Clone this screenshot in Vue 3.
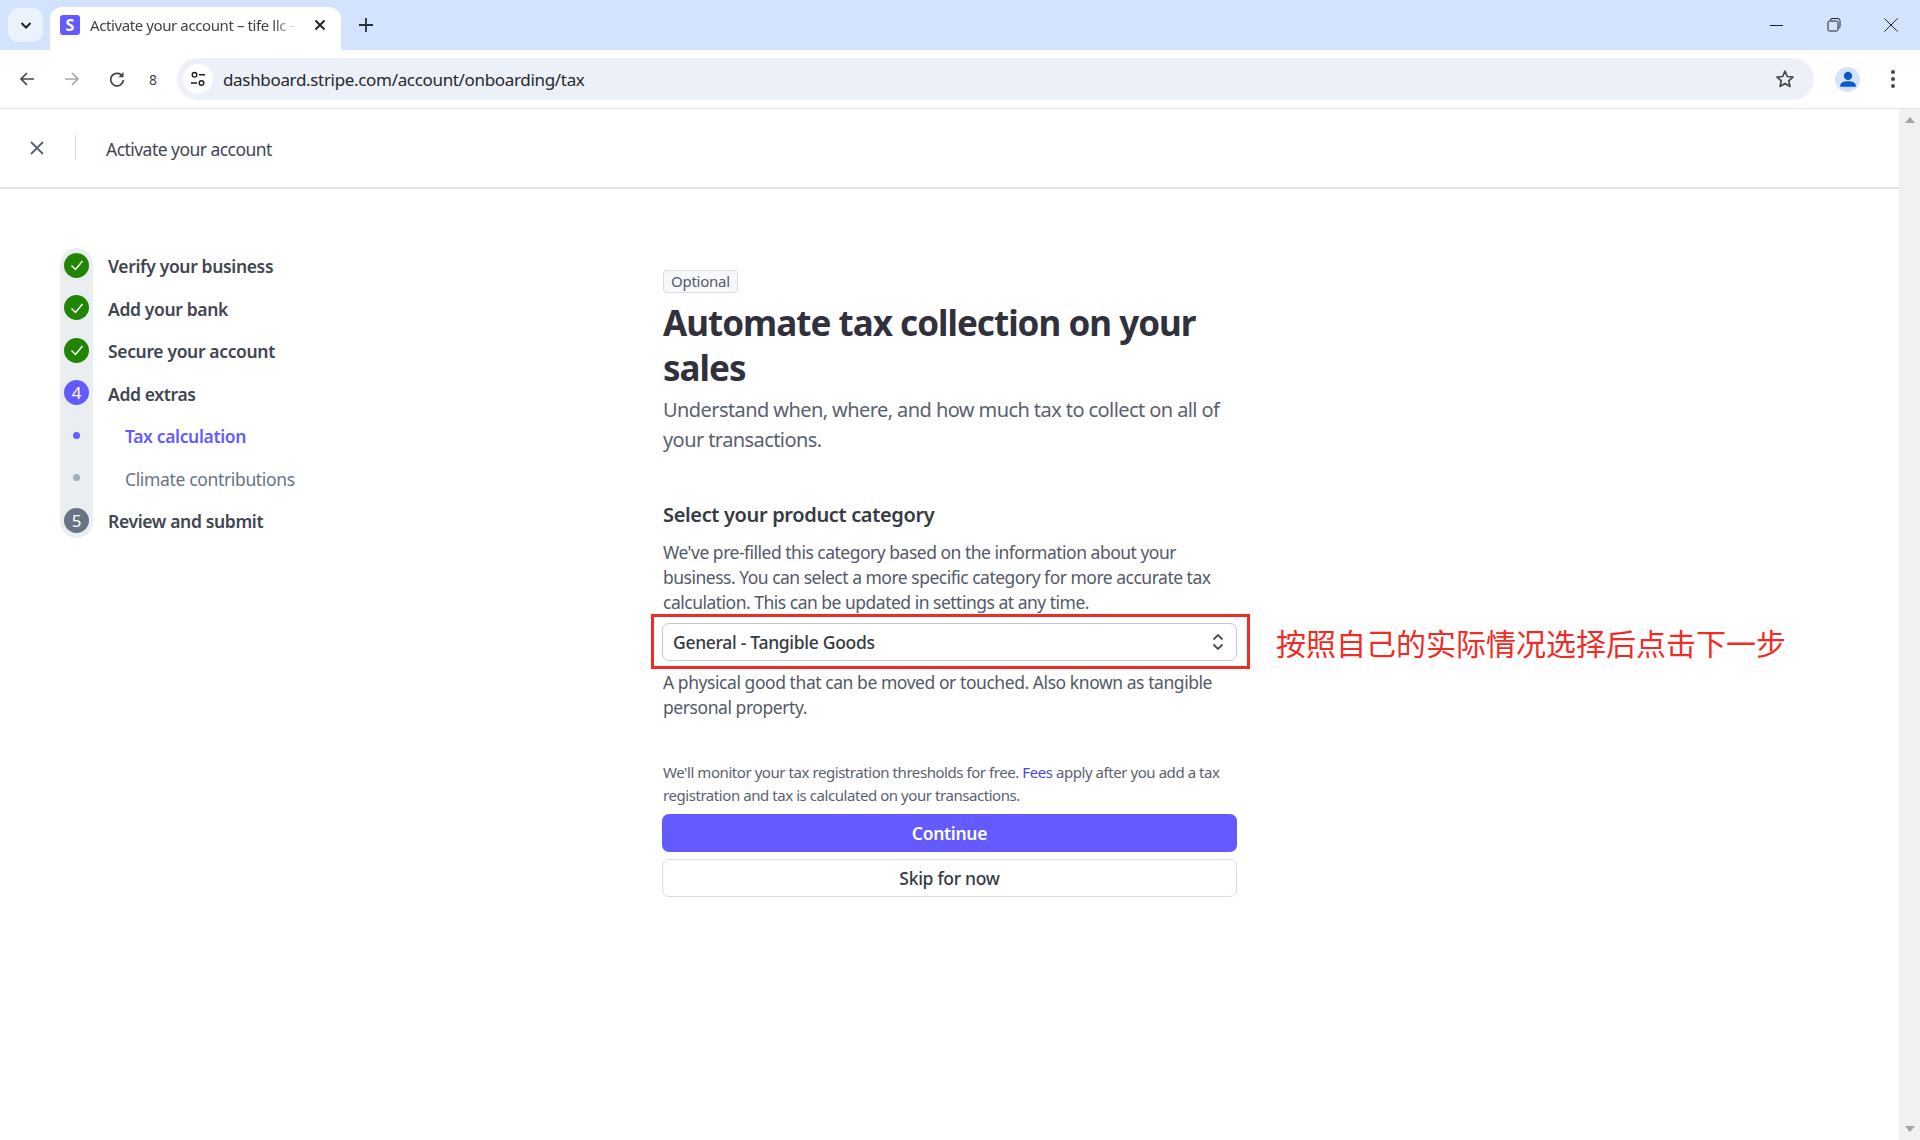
<script setup>
// 侧边步骤数据
const steps = [
  { label: 'Verify your business', kind: 'done' },
  { label: 'Add your bank', kind: 'done' },
  { label: 'Secure your account', kind: 'done' },
  { label: 'Add extras', kind: 'current', num: 4 },
  { label: 'Tax calculation', kind: 'sub-active' },
  { label: 'Climate contributions', kind: 'sub' },
  { label: 'Review and submit', kind: 'todo', num: 5 },
]
</script>

<template>
  <div class="window">
    <!-- 标签栏 -->
    <div class="tabstrip">
      <button class="tab-search" type="button">
        <svg viewBox="0 0 16 16" width="16" height="16"><path d="M3.5 6 8 10.5 12.5 6" fill="none" stroke="#1f1f1f" stroke-width="2" /></svg>
      </button>
      <div class="tab">
        <span class="favicon">S</span>
        <span class="tab-title">Activate your account – tife llc –</span>
        <svg class="tab-close" viewBox="0 0 12 12" width="12" height="12"><path d="M1.5 1.5l9 9M10.5 1.5l-9 9" stroke="#1f1f1f" stroke-width="1.8" /></svg>
      </div>
      <svg class="tab-new" viewBox="0 0 14 14" width="14" height="14"><path d="M7 0v14M0 7h14" stroke="#2b2f36" stroke-width="1.8" /></svg>
      <div class="win-controls">
        <svg viewBox="0 0 14 14" width="14" height="14"><path d="M0 7.5h13" stroke="#1f1f1f" stroke-width="1" /></svg>
        <svg viewBox="0 0 14 14" width="14" height="14"><path d="M3.5 2.5V2a1.5 1.5 0 0 1 1.5-1.5h6A2 2 0 0 1 13 2.500v6A1.500 1.500 0 0 1 11.500 10" fill="none" stroke="#1f1f1f" /><rect x="1" y="3" width="10" height="10" rx="1.500" fill="none" stroke="#1f1f1f" /></svg>
        <svg viewBox="0 0 14 14" width="14" height="14"><path d="M.5.5l13 13M13.500.5l-13 13" stroke="#1f1f1f" stroke-width="1" /></svg>
      </div>
    </div>

    <!-- 地址栏 -->
    <div class="toolbar">
      <svg class="nav-icon" viewBox="0 0 16 16" width="16" height="16"><path d="M15 8H2M8 2 2 8l6 6" fill="none" stroke="#474747" stroke-width="1.700" /></svg>
      <svg class="nav-icon" viewBox="0 0 16 16" width="16" height="16"><path d="M1 8h13M8 2l6 6-6 6" fill="none" stroke="#a8a8a8" stroke-width="1.700" /></svg>
      <svg class="nav-icon" viewBox="0 0 16 16" width="16" height="16"><path d="M13.500 5.500A6.300 6.300 0 1 0 14.300 9" fill="none" stroke="#474747" stroke-width="1.700" /><path d="M14.500 1v5.200H9.300z" fill="#474747" /></svg>
      <span class="nav-count">8</span>
      <div class="omnibox">
        <span class="site-tune">
          <svg viewBox="0 0 16 16" width="16" height="16">
            <circle cx="4.500" cy="3.800" r="2.300" fill="none" stroke="#1f1f1f" stroke-width="1.400" />
            <path d="M9 3.800h6M1 12h6" stroke="#1f1f1f" stroke-width="1.500" />
            <circle cx="11.500" cy="12" r="2.300" fill="none" stroke="#1f1f1f" stroke-width="1.400" />
          </svg>
        </span>
        <span class="url">dashboard.stripe.com/account/onboarding/tax</span>
        <svg class="star" viewBox="0 0 20 20" width="20" height="20"><path d="M10 2.200l2.300 5.300 5.700.5-4.300 3.800 1.300 5.600L10 14.500l-5 2.900 1.300-5.600L2 8l5.700-.5z" fill="none" stroke="#474747" stroke-width="1.700" stroke-linejoin="round" /></svg>
      </div>
      <span class="avatar">
        <svg viewBox="0 0 24 24" width="25" height="25"><circle cx="12.500" cy="8.500" r="4" fill="#0b57d0" /><path d="M5 19v-1c0-3 3.500-4.300 7.500-4.300S20 15 20 18v1z" fill="#0b57d0" /></svg>
      </span>
      <svg class="menu-dots" viewBox="0 0 4 18" width="4" height="18"><circle cx="2" cy="2" r="2" fill="#474747" /><circle cx="2" cy="9" r="2" fill="#474747" /><circle cx="2" cy="16" r="2" fill="#474747" /></svg>
    </div>

    <div class="viewport">
      <div class="page">
        <!-- 顶部标题栏 -->
        <header class="page-head">
          <svg viewBox="0 0 14 14" width="14" height="14"><path d="M1 1l12 12M13 1 1 13" stroke="#596171" stroke-width="1.800" /></svg>
          <span class="head-sep"></span>
          <span class="head-title">Activate your account</span>
        </header>

        <div class="page-body">
          <ul class="steps">
            <li v-for="s in steps" :key="s.label" class="step" :class="`step--${s.kind}`">
              <span class="mark">
                <svg v-if="s.kind === 'done'" viewBox="0 0 14 14" width="14" height="14"><path d="M1.500 7.500 5.500 11.500 12.500 3" fill="none" stroke="#fff" stroke-width="1.500" /></svg>
                <template v-else-if="s.num">{{ s.num }}</template>
              </span>
              <span class="step-label">{{ s.label }}</span>
            </li>
          </ul>

          <main class="content">
            <span class="badge">Optional</span>
            <h1 class="title">Automate tax collection on your sales</h1>
            <p class="lead">Understand when, where, and how much tax to collect on all of your transactions.</p>

            <h2 class="section-title">Select your product category</h2>
            <p class="desc">We've pre-filled this category based on the information about your business. You can select a more specific category for more accurate tax calculation. This can be updated in settings at any time.</p>

            <div class="select-wrap">
              <div class="select">
                <span>General - Tangible Goods</span>
                <svg viewBox="0 0 12 18" width="12" height="18"><path d="M1.500 6.500 6 2l4.500 4.500M1.500 11.500 6 16l4.500-4.500" fill="none" stroke="#474e5a" stroke-width="1.800" /></svg>
              </div>
              <span class="note">按照自己的实际情况选择后点击下一步</span>
            </div>

            <p class="desc hint">A physical good that can be moved or touched. Also known as tangible personal property.</p>

            <p class="small">We'll monitor your tax registration thresholds for free. <a class="link">Fees</a> apply after you add a tax registration and tax is calculated on your transactions.</p>

            <button class="btn btn--primary" type="button">Continue</button>
            <button class="btn btn--plain" type="button">Skip for now</button>
          </main>
        </div>
      </div>

      <!-- 滚动条 -->
      <div class="scrollbar">
        <svg viewBox="0 0 10 6" width="10" height="6"><path d="M5 0l5 6H0z" fill="#a3a3a3" /></svg>
        <svg viewBox="0 0 10 6" width="10" height="6"><path d="M5 6l5-6H0z" fill="#a3a3a3" /></svg>
      </div>
    </div>
  </div>
</template>

<style>
html,
body {
  margin: 0;
  background: #fff;
}
</style>

<style scoped>
.window {
  width: 1920px;
  height: 1140px;
  display: flex;
  flex-direction: column;
  overflow: hidden;
  font-family: "Noto Sans", "Open Sans", sans-serif;
  color: #30313d;
}

/* 标签栏 */
.tabstrip {
  height: 50px;
  flex: none;
  display: flex;
  align-items: flex-end;
  background: #d3e3fd;
  padding-left: 8px;
}

.tab-search {
  width: 35px;
  height: 34px;
  margin-bottom: 8px;
  border: none;
  border-radius: 10px;
  background: #ecf2fc;
  display: flex;
  align-items: center;
  justify-content: center;
  padding: 0;
}

.tab {
  width: 291px;
  height: 43px;
  margin-left: 7px;
  background: #fff;
  border-radius: 12px 12px 0 0;
  display: flex;
  align-items: center;
  box-sizing: border-box;
  padding: 0 0 7px 10px;
}

.favicon {
  width: 20px;
  height: 20px;
  flex: none;
  border-radius: 3px;
  background: #635bff;
  color: #fff;
  font-size: 16px;
  font-weight: 700;
  line-height: 20px;
  text-align: center;
}

.tab-title {
  width: 208px;
  margin-left: 10px;
  font-size: 15px;
  letter-spacing: -0.4px;
  color: #3f4248;
  white-space: nowrap;
  overflow: hidden;
  -webkit-mask-image: linear-gradient(to right, #000 88%, transparent 100%);
  mask-image: linear-gradient(to right, #000 88%, transparent 100%);
}

.tab-close {
  margin-left: 16px;
}

.tab-new {
  margin: 0 0 18px 18px;
}

.win-controls {
  margin-left: auto;
  align-self: center;
  display: flex;
  gap: 43px;
  padding-right: 22px;
}

/* 地址栏 */
.toolbar {
  height: 59px;
  flex: none;
  box-sizing: border-box;
  border-bottom: 1px solid #e0e3e7;
  border-radius: 12px 12px 0 0;
  background: #fff;
  display: flex;
  align-items: center;
  padding: 0 0 0 19px;
}

.nav-icon {
  margin-right: 29px;
}

.nav-count {
  margin-left: -5px;
  width: 10px;
  font-size: 14px;
  color: #3f4248;
  margin-right: 18px;
}

.omnibox {
  width: 1637px;
  height: 42px;
  box-sizing: border-box;
  border-radius: 21px;
  background: #ebf0f9;
  display: flex;
  align-items: center;
  padding: 0 19px 0 6px;
}

.site-tune {
  width: 30px;
  height: 30px;
  border-radius: 50%;
  background: #fff;
  display: flex;
  align-items: center;
  justify-content: center;
}

.url {
  margin-left: 10px;
  font-size: 17px;
  letter-spacing: -0.33px;
  color: #26282c;
}

.star {
  margin-left: auto;
}

.avatar {
  width: 25px;
  height: 25px;
  margin-left: 21px;
  border-radius: 50%;
  background: #d3e3fd;
}

.menu-dots {
  margin-left: 31px;
}

/* 页面区域 */
.viewport {
  flex: 1;
  min-height: 0;
  display: flex;
}

.page {
  flex: 1;
  min-width: 0;
  background: #fff;
}

.page-head {
  height: 80px;
  box-sizing: border-box;
  border-bottom: 2px solid #dde2e8;
  display: flex;
  align-items: center;
  padding: 0 0 1px 30px;
}

.head-sep {
  width: 1px;
  height: 25px;
  margin-left: 31px;
  background: #d8dee4;
}

.head-title {
  margin-left: 30px;
  padding-top: 2px;
  font-size: 17.5px;
  letter-spacing: -0.54px;
  color: #414552;
}

.page-body {
  display: flex;
  align-items: flex-start;
  padding: 55px 0 0 60px;
}

/* 左侧步骤 */
.steps {
  position: relative;
  width: 602px;
  flex: none;
  list-style: none;
  margin: 0;
  padding: 0;
}

.steps::before {
  content: "";
  position: absolute;
  left: 0;
  top: 4px;
  bottom: 4px;
  width: 33px;
  border-radius: 17px;
  background: #ebeef1;
}

.step {
  position: relative;
  height: 42.5px;
  display: flex;
  align-items: center;
  font-size: 17.5px;
  font-weight: 600;
  letter-spacing: -0.35px;
  color: #414552;
}

.step-label {
  padding-top: 2px;
}

.mark {
  width: 25px;
  height: 25px;
  margin: 0 19px 0 4px;
  flex: none;
  border-radius: 50%;
  display: flex;
  align-items: center;
  justify-content: center;
  font-size: 17px;
  font-weight: 400;
  color: #fff;
}

.step--done .mark {
  background: #228403;
}

.step--current .mark {
  background: #635bff;
}

.step--todo .mark {
  background: #687385;
}

.step--sub-active .mark,
.step--sub .mark {
  width: 7px;
  height: 7px;
  margin: 0 45px 0 13px;
  background: #635bff;
}

.step--sub .mark {
  background: #a3acba;
}

.step--sub-active .step-label {
  color: #635bff;
}

.step--sub .step-label {
  color: #687385;
  font-weight: 400;
}

/* 主内容 */
.content {
  width: 575px;
  flex: none;
  display: flex;
  flex-direction: column;
  align-items: flex-start;
  padding-top: 26px;
}

.badge {
  box-sizing: border-box;
  height: 23px;
  margin-left: 1px;
  padding: 0 7px;
  border: 1px solid #d8dee4;
  border-radius: 4px;
  background: #f6f8fa;
  font-size: 15px;
  line-height: 20px;
  letter-spacing: -0.25px;
  color: #545969;
}

.title {
  margin: 7px 0 0 1px;
  font-size: 35px;
  line-height: 45px;
  font-weight: 700;
  letter-spacing: -0.98px;
  color: #30313d;
}

.lead {
  margin: 5px 0 0 1px;
  font-size: 20px;
  line-height: 30px;
  letter-spacing: -0.58px;
  color: #596171;
}

.section-title {
  margin: 30px 0 0 1px;
  padding-top: 15px;
  font-size: 20px;
  line-height: 30px;
  font-weight: 600;
  letter-spacing: -0.35px;
  color: #353a44;
}

.desc {
  margin: 10px 0 0 1px;
  font-size: 17.5px;
  line-height: 25px;
  letter-spacing: -0.5px;
  color: #545969;
}

.select-wrap {
  position: relative;
  width: 100%;
  margin-top: 8px;
}

/* 红色标注框 */
.select-wrap::after {
  content: "";
  position: absolute;
  left: -11px;
  right: -13px;
  top: -9px;
  bottom: -8px;
  border: 3px solid #f02c24;
  pointer-events: none;
}

.note {
  position: absolute;
  left: 614px;
  top: 0;
  font-family: "Noto Sans CJK SC", sans-serif;
  font-size: 30px;
  line-height: 38px;
  color: #f02c24;
  white-space: nowrap;
}

.select {
  height: 38px;
  box-sizing: border-box;
  border: 1px solid #c0c8d2;
  border-radius: 7px;
  display: flex;
  align-items: center;
  justify-content: space-between;
  padding: 0 12px 0 10px;
  font-size: 17.5px;
  font-weight: 500;
  letter-spacing: -0.3px;
  color: #353a44;
}

.hint {
  margin-top: 9px;
  letter-spacing: -0.44px;
}

.small {
  margin: 41px 0 0 1px;
  font-size: 15px;
  line-height: 22.500px;
  letter-spacing: -0.44px;
  color: #596171;
}

.link {
  color: #4f46d8;
}

.btn {
  width: 100%;
  height: 38px;
  flex: none;
  border-radius: 7px;
  font-family: inherit;
  font-size: 17.5px;
  font-weight: 600;
  letter-spacing: -0.3px;
  padding: 0;
}

.btn--primary {
  margin-top: 8px;
  border: none;
  background: #635bff;
  color: #fff;
}

.btn--plain {
  margin-top: 7px;
  border: 1px solid #d8dee4;
  background: #fff;
  font-weight: 500;
  color: #353a44;
}

.scrollbar {
  width: 21px;
  flex: none;
  background: #f1f1f1;
  display: flex;
  flex-direction: column;
  align-items: center;
  justify-content: space-between;
  padding: 8px 0;
  box-sizing: border-box;
}
</style>
